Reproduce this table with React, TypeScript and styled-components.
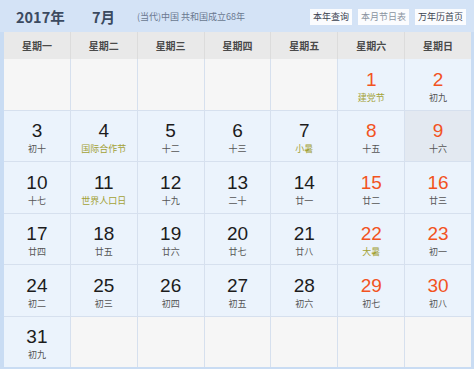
import React from "react";
import styled, { createGlobalStyle } from "styled-components";

const Global = createGlobalStyle`
  html, body { margin: 0; padding: 0; background: #fff; }
  body { font-family: "Noto Sans CJK SC", "Noto Sans", sans-serif; }
`;

const Frame = styled.div`
  width: 474px;
  height: 369px;
  box-sizing: border-box;
  background: #c9dcf3;
  padding: 0 3px 2px 4px;
  display: flex;
  flex-direction: column;
`;

const TopBar = styled.div`
  height: 32px;
  margin-left: -4px;
  margin-right: -3px;
  padding: 0 8px 0 16px;
  background: #d4e3f6;
  display: flex;
  align-items: center;
`;

const Title = styled.span<{ $w: number }>`
  font-family: "Noto Sans CJK SC", sans-serif;
  font-weight: 700;
  font-size: 14.5px;
  color: #3b4a60;
  width: ${(p) => p.$w}px;
`;

const Era = styled.span`
  font-size: 9px;
  color: #6a7890;
  flex: 1;
`;

const Buttons = styled.div`
  display: flex;
  gap: 6px;
  margin-top: 2px;
`;

const Btn = styled.span<{ $muted?: boolean }>`
  background: #fbfcfe;
  font-size: 9px;
  line-height: 16px;
  height: 16px;
  padding: 0 3px;
  color: ${(p) => (p.$muted ? "#8a93a0" : "#3a4250")};
`;

const WeekRow = styled.div`
  height: 27px;
  display: grid;
  grid-template-columns: repeat(7, 1fr);
  gap: 1px;
  background: #dcdcdc;
`;

const WeekCell = styled.div`
  background: #e9e9e9;
  display: flex;
  align-items: center;
  justify-content: center;
  font-size: 10px;
  font-weight: 700;
  color: #4a4a4a;
`;

const Grid = styled.div`
  flex: 1;
  display: grid;
  grid-template-columns: repeat(7, 1fr);
  grid-auto-rows: 1fr;
  gap: 1px;
  background: #d6e0ee;
`;

const Cell = styled.div<{ $kind: "empty" | "day" | "today" }>`
  background: ${(p) =>
    p.$kind === "empty" ? "#f6f6f6" : p.$kind === "today" ? "#e3e9f1" : "#ebf3fc"};
  display: flex;
  flex-direction: column;
  align-items: center;
  justify-content: center;
  padding-top: 4px;
`;

const Num = styled.div<{ $red?: boolean }>`
  font-family: "Liberation Sans", Arial, sans-serif;
  font-size: 19px;
  line-height: 22px;
  color: ${(p) => (p.$red ? "#f2531f" : "#1c1c1c")};
`;

const Lunar = styled.div<{ $fest?: boolean }>`
  font-family: "Noto Sans CJK SC", sans-serif;
  font-size: 9px;
  line-height: 13px;
  color: ${(p) => (p.$fest ? "#a3a236" : "#555")};
`;

type Day = { d: number; l: string; fest?: boolean };

const days: Day[] = [
  { d: 1, l: "建党节", fest: true },
  { d: 2, l: "初九" },
  { d: 3, l: "初十" },
  { d: 4, l: "国际合作节", fest: true },
  { d: 5, l: "十二" },
  { d: 6, l: "十三" },
  { d: 7, l: "小暑", fest: true },
  { d: 8, l: "十五" },
  { d: 9, l: "十六" },
  { d: 10, l: "十七" },
  { d: 11, l: "世界人口日", fest: true },
  { d: 12, l: "十九" },
  { d: 13, l: "二十" },
  { d: 14, l: "廿一" },
  { d: 15, l: "廿二" },
  { d: 16, l: "廿三" },
  { d: 17, l: "廿四" },
  { d: 18, l: "廿五" },
  { d: 19, l: "廿六" },
  { d: 20, l: "廿七" },
  { d: 21, l: "廿八" },
  { d: 22, l: "大暑", fest: true },
  { d: 23, l: "初一" },
  { d: 24, l: "初二" },
  { d: 25, l: "初三" },
  { d: 26, l: "初四" },
  { d: 27, l: "初五" },
  { d: 28, l: "初六" },
  { d: 29, l: "初七" },
  { d: 30, l: "初八" },
  { d: 31, l: "初九" },
];

const weekNames = ["星期一", "星期二", "星期三", "星期四", "星期五", "星期六", "星期日"];

export default function App() {
  const cells: (Day | null)[] = [];
  for (let i = 0; i < 5; i++) cells.push(null);
  days.forEach((d) => cells.push(d));
  while (cells.length < 42) cells.push(null);

  return (
    <>
      <Global />
      <Frame>
        <TopBar>
          <Title $w={76}>2017年</Title>
          <Title $w={45}>7月</Title>
          <Era>(当代)中国 共和国成立68年</Era>
          <Buttons>
            <Btn>本年查询</Btn>
            <Btn $muted>本月节日表</Btn>
            <Btn>万年历首页</Btn>
          </Buttons>
        </TopBar>
        <WeekRow>
          {weekNames.map((w) => (
            <WeekCell key={w}>{w}</WeekCell>
          ))}
        </WeekRow>
        <Grid>
          {cells.map((c, i) => {
            if (!c) return <Cell key={i} $kind="empty" />;
            const col = i % 7;
            const red = col >= 5;
            return (
              <Cell key={i} $kind={c.d === 9 ? "today" : "day"}>
                <Num $red={red}>{c.d}</Num>
                <Lunar $fest={c.fest}>{c.l}</Lunar>
              </Cell>
            );
          })}
        </Grid>
      </Frame>
    </>
  );
}
